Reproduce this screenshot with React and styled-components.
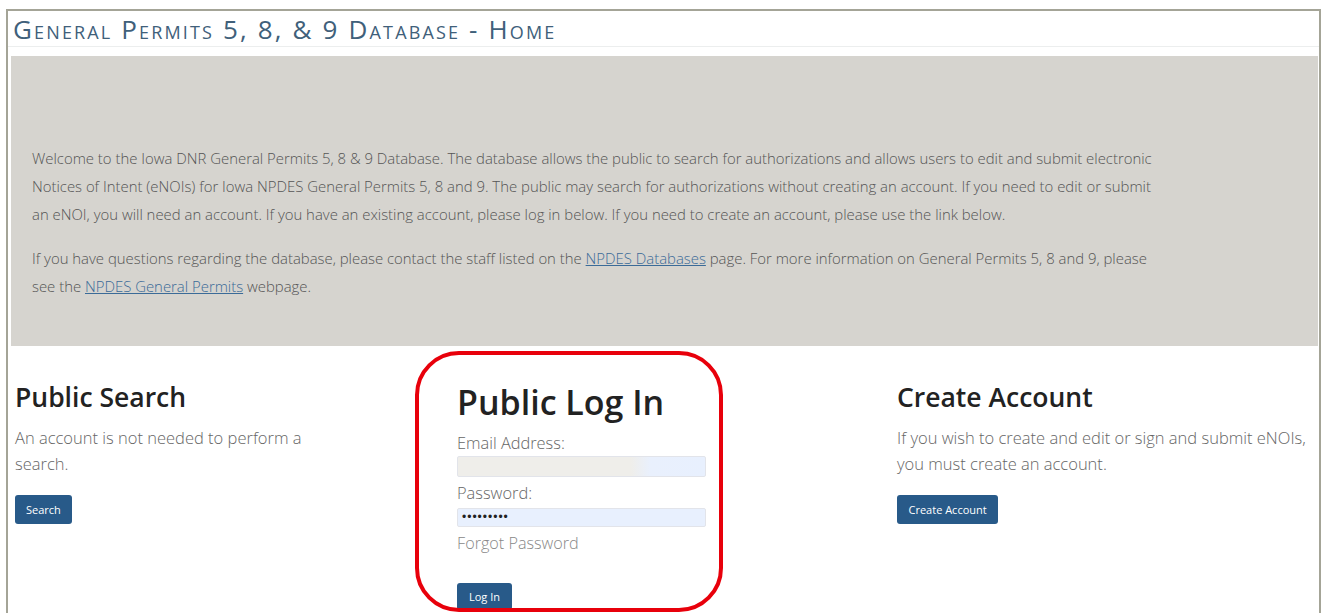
import React from "react";
import styled, { createGlobalStyle } from "styled-components";

const GlobalStyle = createGlobalStyle`
  html, body {
    margin: 0;
    padding: 0;
    background: #ffffff;
  }
  body {
    font-family: "Open Sans", "Noto Sans", sans-serif;
    overflow: hidden;
  }
  * { box-sizing: border-box; }
`;

const Page = styled.div`
  padding: 9px 0 0 6px;
  height: 613px;
`;

const Frame = styled.div`
  width: 1315px;
  height: 604px;
  border: 2px solid #a4a497;
  border-bottom: none;
  display: flex;
  flex-direction: column;
`;

const TitleBar = styled.header`
  height: 36px;
  padding: 1px 0 0 5px;
  border-bottom: 1px solid #eceeee;
  display: flex;
  align-items: center;
`;

const Title = styled.h1`
  margin: 0;
  font-family: "Open Sans", sans-serif;
  font-weight: 400;
  font-size: 26px;
  line-height: 1;
  font-variant: small-caps;
  color: #40607a;
  letter-spacing: 2.15px;
`;

const Jumbotron = styled.section`
  margin: 9px 1px 0 3px;
  height: 290px;
  background: #d6d4cf;
  padding: 88px 153px 0 21px;
`;

const Lead = styled.p`
  margin: 0 0 16px 0;
  font-family: "Open Sans", sans-serif;
  font-weight: 300;
  font-size: 14.9px;
  line-height: 28px;
  color: #555;
`;

const Link = styled.a`
  color: #3b6b98;
  text-decoration: underline;
`;

const Row = styled.div`
  display: grid;
  grid-template-columns: 442px 440px 1fr;
  padding: 0 0 0 7px;
  flex: 1;
`;

const Column = styled.div`
  position: relative;
  padding-top: 36px;
`;

const Heading = styled.h2`
  margin: 0 0 ${(p) => (p.$large ? 10 : 11)}px 0;
  font-family: "Open Sans", sans-serif;
  font-weight: 600;
  font-size: ${(p) => (p.$large ? 34 : 26.5)}px;
  line-height: 1.2;
  color: #222;
`;

const Text = styled.p`
  margin: 0 0 18px 0;
  font-family: "Open Sans", sans-serif;
  font-weight: 300;
  font-size: 16.5px;
  line-height: 26px;
  color: #666;
  max-width: ${(p) => p.$max || 420}px;
`;

const Button = styled.button`
  display: inline-block;
  background: #285a89;
  color: #fff;
  border: none;
  border-radius: 3px;
  font-family: "Open Sans", sans-serif;
  font-size: 11px;
  height: ${(p) => p.$h || 29}px;
  padding: 0 ${(p) => p.$px || 10}px;
  cursor: pointer;
`;

const Form = styled.form`
  display: flex;
  flex-direction: column;
  align-items: flex-start;
`;

const Label = styled.label`
  font-family: "Open Sans", sans-serif;
  font-weight: 300;
  font-size: 16.4px;
  line-height: 20px;
  color: #666;
`;

const Input = styled.input`
  width: 249px;
  height: ${(p) => p.$h || 21}px;
  margin: ${(p) => p.$mt || 3}px 0 ${(p) => p.$mb || 3}px 0;
  border: 1px solid #e2e4ea;
  border-radius: 2px;
  background: ${(p) => p.$bg};
  font-size: 12px;
  color: #222;
  padding: 0 4px;
  letter-spacing: 1px;
  outline: none;
`;

const Forgot = styled.a`
  font-family: "Open Sans", sans-serif;
  font-weight: 300;
  font-size: 16.2px;
  line-height: 22px;
  color: #888;
  text-decoration: none;
  margin-bottom: 29px;
`;

const Highlight = styled.div`
  position: absolute;
  left: -42px;
  top: 5px;
  width: 308px;
  height: 261px;
  border: 4px solid #e8000b;
  border-radius: 44px;
  pointer-events: none;
`;

export default function App() {
  return (
    <>
      <GlobalStyle />
      <Page>
        <Frame>
          <TitleBar>
            <Title>General Permits 5, 8, &amp; 9 Database - Home</Title>
          </TitleBar>
          <Jumbotron>
            <Lead>
              Welcome to the Iowa DNR General Permits 5, 8 &amp; 9 Database. The database allows the
              public to search for authorizations and allows users to edit and submit electronic
              Notices of Intent (eNOIs) for Iowa NPDES General Permits 5, 8 and 9. The public may
              search for authorizations without creating an account. If you need to edit or submit
              an eNOI, you will need an account. If you have an existing account, please log in
              below. If you need to create an account, please use the link below.
            </Lead>
            <Lead>
              If you have questions regarding the database, please contact the staff listed on the{" "}
              <Link href="#">NPDES Databases</Link> page. For more information on General Permits 5,
              8 and 9, please see the <Link href="#">NPDES General Permits</Link> webpage.
            </Lead>
          </Jumbotron>
          <Row>
            <Column>
              <Heading>Public Search</Heading>
              <Text $max={310}>An account is not needed to perform a search.</Text>
              <Button $px={11}>Search</Button>
            </Column>
            <Column>
              <Highlight />
              <Heading $large>Public Log In</Heading>
              <Form onSubmit={(e) => e.preventDefault()}>
                <Label htmlFor="email">Email Address:</Label>
                <Input
                  id="email"
                  type="email"
                  $mb={6}
                  $bg="linear-gradient(90deg, #efeeea 0%, #efeeea 70%, #e9f0fd 78%, #e8f0fe 100%)"
                />
                <Label htmlFor="pw">Password:</Label>
                <Input
                  id="pw"
                  type="password"
                  defaultValue="password1"
                  $h={19}
                  $mt={5}
                  $mb={5}
                  $bg="#e8f0fe"
                />
                <Forgot href="#">Forgot Password</Forgot>
                <Button $h={27} $px={12}>Log In</Button>
              </Form>
            </Column>
            <Column>
              <Heading>Create Account</Heading>
              <Text $max={425}>
                If you wish to create and edit or sign and submit eNOIs, you must create an account.
              </Text>
              <Button $px={11.5}>Create Account</Button>
            </Column>
          </Row>
        </Frame>
      </Page>
    </>
  );
}
